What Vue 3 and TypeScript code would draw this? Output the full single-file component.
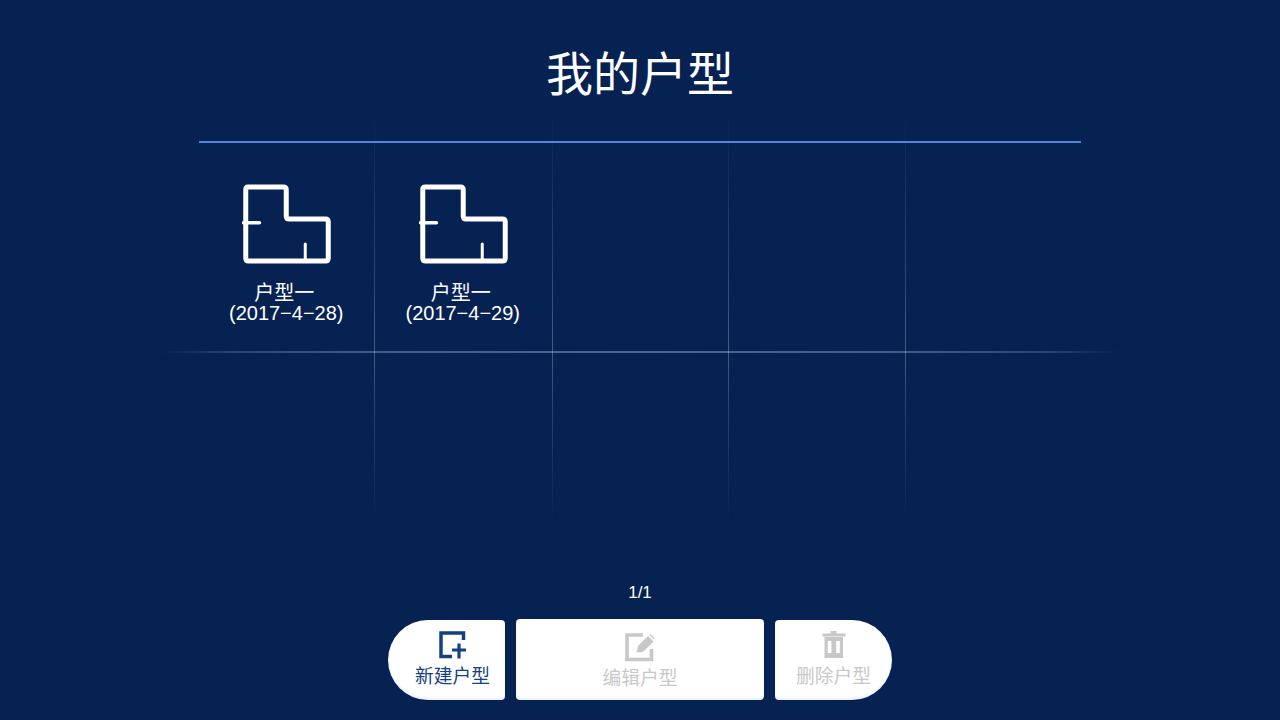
<script setup lang="ts">
interface Plan { name: string; date: string }
const plans: Plan[] = [
  { name: '户型一', date: '(2017−4−28)' },
  { name: '户型一', date: '(2017−4−29)' },
]
const verticals = [0, 1, 2, 3]
</script>

<template>
  <div class="page">
    <div class="grid-lines" aria-hidden="true">
      <span v-for="v in verticals" :key="v" class="vline" :class="'v' + v"></span>
      <span class="hline"></span>
    </div>

    <h1 class="title">我的户型</h1>
    <div class="rule"></div>

    <ul class="plans">
      <li v-for="p in plans" :key="p.date" class="plan">
        <svg class="plan-icon" width="90" height="80" viewBox="0 0 90 80" fill="none" stroke="#fff" stroke-width="5" stroke-linejoin="round" stroke-linecap="round">
          <path d="M6 3H41.500Q44.250 3 44.250 6V32Q44.250 35 47 35H83.500Q86.250 35 86.250 38V74Q86.250 77 83.500 77H6.500Q3.750 77 3.750 74V6Q3.750 3 6 3Z" />
          <path d="M1.500 38.700H17.500" stroke-width="3.400" />
          <path d="M63.250 60V77" stroke-width="3" />
        </svg>
        <div class="plan-text">
          <div class="plan-name">{{ p.name }}</div>
          <div class="plan-date">{{ p.date }}</div>
        </div>
      </li>
    </ul>

    <div class="spacer"></div>

    <div class="pager">1/1</div>

    <div class="actions">
      <button class="btn btn-left" type="button">
        <svg width="28" height="28" viewBox="0 0 28 28" fill="none" stroke="#14427f" stroke-width="3.500">
          <path d="M13 25.500H2V2H24.500V9" />
          <path d="M20 12.500V27.500M13 19H27" stroke-width="3.200" />
        </svg>
        <span>新建户型</span>
      </button>
      <button class="btn btn-mid" type="button">
        <svg width="30" height="29" viewBox="0 0 30 29" fill="none" stroke="#c8c8c8" stroke-width="3.600">
          <path d="M18 2H2V26.500H26.500V16" />
          <path d="M11.500 19.500L13 13L23 3L28.500 8.500L18 19Z" fill="#c8c8c8" stroke="none" />
          <path d="M24.500 2L25.500 1L29.500 5L28.500 6Z" fill="#c8c8c8" stroke="none" />
        </svg>
        <span class="off">编辑户型</span>
      </button>
      <button class="btn btn-right" type="button">
        <svg width="24" height="28" viewBox="0 0 24 28">
          <path
            fill="#c8c8c8"
            fill-rule="evenodd"
            d="M8.500 0H14.500V2.500H23.500V5.500H0.500V2.500H8.500ZM2.500 6H21V27H2.500ZM5.800 10V22H9.400V10ZM14.200 10V22H17.800V10Z"
          />
        </svg>
        <span class="off">删除户型</span>
      </button>
    </div>
  </div>
</template>

<style>
html, body { margin: 0; background: #052253; }
</style>

<style scoped>
.page {
  position: relative;
  width: 1280px;
  height: 720px;
  overflow: hidden;
  box-sizing: border-box;
  padding-bottom: 20px;
  background: #052253;
  display: flex;
  flex-direction: column;
  align-items: center;
  color: #fff;
  font-family: "Liberation Sans", "Noto Sans CJK SC", sans-serif;
}
.grid-lines { position: absolute; inset: 0; pointer-events: none; }
.vline {
  position: absolute;
  top: 110px;
  height: 412px;
  width: 1px;
  background: linear-gradient(to bottom, rgba(255,255,255,0) 0%, rgba(255,255,255,.05) 12%, rgba(255,255,255,.2) 45%, rgba(255,255,255,.26) 58%, rgba(255,255,255,.14) 75%, rgba(255,255,255,0) 100%);
}
.v0 { left: 374px; }
.v1 { left: 552px; }
.v2 { left: 728px; }
.v3 { left: 905px; }
.hline {
  position: absolute;
  left: 160px;
  width: 960px;
  top: 351px;
  height: 2px;
  background: linear-gradient(to right, rgba(255,255,255,0) 0%, rgba(255,255,255,.16) 8%, rgba(255,255,255,.26) 22%, rgba(255,255,255,.3) 50%, rgba(255,255,255,.26) 78%, rgba(255,255,255,.16) 92%, rgba(255,255,255,0) 100%);
}
.title {
  position: relative;
  margin: 46px 0 0;
  font-size: 47px;
  line-height: 58px;
  height: 58px;
  font-weight: 400;
}
.rule {
  position: relative;
  width: 882px;
  height: 2px;
  margin-top: 37px;
  background: #4f86dc;
}
.plans {
  position: relative;
  list-style: none;
  width: 882px;
  margin: 41px 0 0;
  padding: 0;
  display: flex;
}
.plan {
  width: 176.500px;
  display: flex;
  flex-direction: column;
  align-items: center;
}
.plan-icon { display: block; }
.plan-text {
  margin-top: 18.500px;
  font-size: 20px;
  line-height: 20px;
  text-align: center;
  white-space: nowrap;
}
.plan-name { padding-right: 6px; }
.plan-date { padding-right: 2px; }
.spacer { flex: 1; }
.pager {
  position: relative;
  font-size: 17px;
  line-height: 20px;
  margin-bottom: 17px;
}
.actions {
  position: relative;
  display: flex;
  gap: 11px;
  height: 80px;
}
.btn {
  box-sizing: border-box;
  display: flex;
  flex-direction: column;
  align-items: center;
  justify-content: flex-start;
  height: 80px;
  padding: 11px 0 0;
  border: none;
  background: #fff;
  border-radius: 4px;
  font-family: inherit;
  font-size: 18.750px;
  line-height: 22px;
  color: #14427f;
  box-shadow: inset 0 -2px 3px rgba(90,130,200,.12);
}
.btn svg { display: block; margin-bottom: 7px; }
.btn-left { width: 117px; padding-left: 12px; border-radius: 40px 4px 4px 40px; }
.btn-mid { width: 248px; padding-top: 14px; height: 81px; margin-top: -1px; }
.btn-mid svg { margin-bottom: 6px; }
.btn-right { width: 117px; border-radius: 4px 40px 40px 4px; }
.off { color: #c8c8c8; }
</style>
